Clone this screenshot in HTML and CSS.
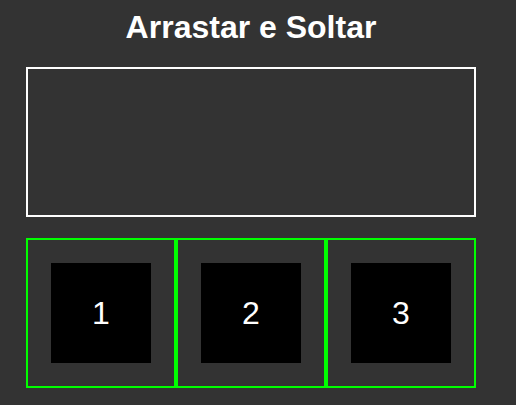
FILE: index.html
```html
<!DOCTYPE html>
<html lang="pt">
<head>
<meta charset="utf-8">
<title>Arrastar e Soltar</title>
<link rel="stylesheet" href="styles.css">
</head>
<body>
<div class="app">
  <h1 class="title">Arrastar e Soltar</h1>
  <div class="dropzone"></div>
  <div class="slots">
    <div class="slot"><div class="item">1</div></div>
    <div class="slot"><div class="item">2</div></div>
    <div class="slot"><div class="item">3</div></div>
  </div>
</div>
</body>
</html>
```
FILE: styles.css
```css
html, body {
  margin: 0;
  padding: 0;
  background: #333333;
}
body {
  font-family: "Liberation Sans", Arial, sans-serif;
  color: #ffffff;
}
.app {
  width: 450px;
  margin-left: 26px;
  padding-top: 9px;
  display: flex;
  flex-direction: column;
}
.title {
  margin: 0 0 21px;
  font-size: 32px;
  font-weight: bold;
  text-align: center;
  line-height: normal;
}
.dropzone {
  box-sizing: border-box;
  width: 450px;
  height: 150px;
  border: 2px solid #ffffff;
}
.slots {
  display: flex;
  margin-top: 21px;
}
.slot {
  box-sizing: border-box;
  width: 150px;
  height: 150px;
  border: 2px solid #00ff00;
  display: flex;
  align-items: center;
  justify-content: center;
}
.item {
  width: 100px;
  height: 100px;
  background: #000000;
  display: flex;
  align-items: center;
  justify-content: center;
  font-size: 32px;
}
```
